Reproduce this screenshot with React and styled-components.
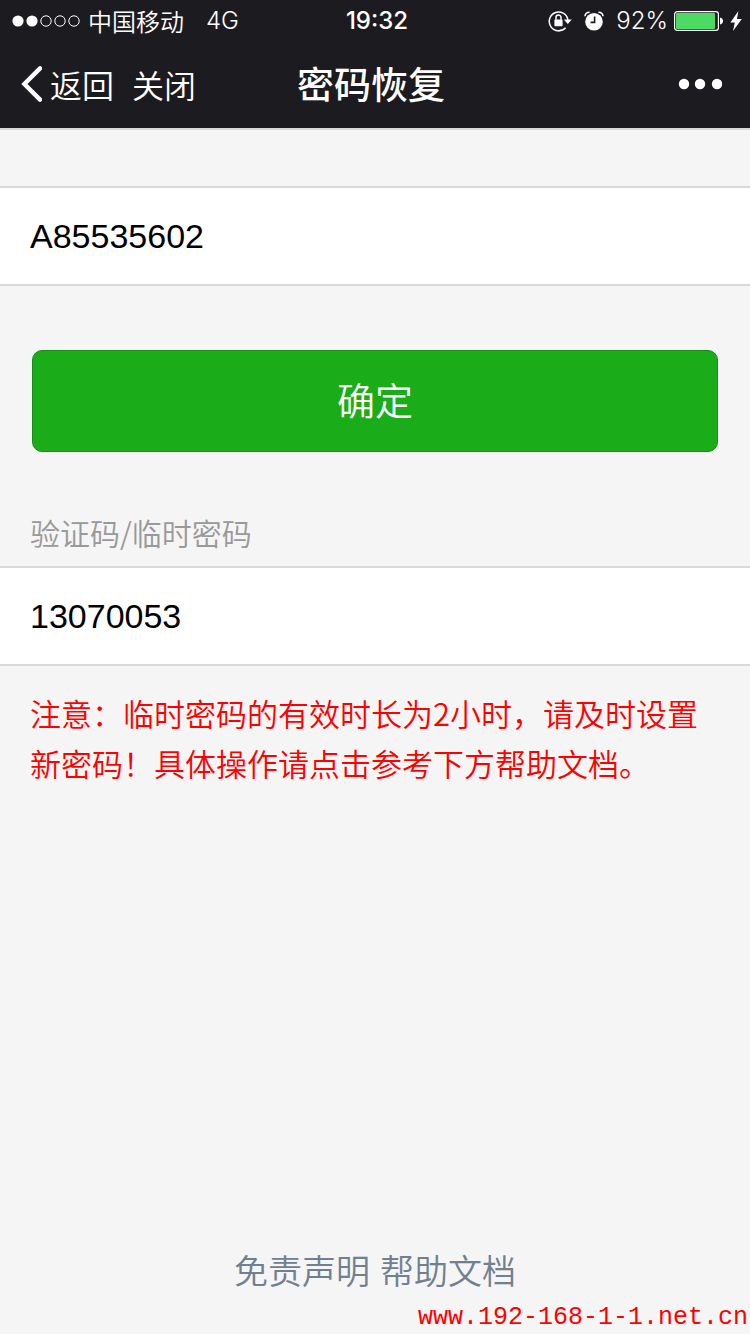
import React, { useState } from "react";
import styled, { createGlobalStyle } from "styled-components";

function SignalIcon() {
  return (
    <svg width="68" height="14" viewBox="0 0 68 14" aria-hidden="true">
      <circle cx="6" cy="7" r="5.6" fill="#fff" />
      <circle cx="20" cy="7" r="5.6" fill="#fff" />
      {[34, 48, 62].map((cx) => (
        <circle key={cx} cx={cx} cy="7" r="5.2" fill="none" stroke="#fff" />
      ))}
    </svg>
  );
}

function RotationLockIcon() {
  return (
    <svg width="24" height="22" viewBox="0 0 24 22" aria-hidden="true">
      <path
        d="M17.6 17.8A9.4 9.4 0 1 1 19.9 9.8"
        fill="none"
        stroke="#fff"
        strokeWidth="1.5"
      />
      <path d="M15.8 9.6h8l-4 4.4z" fill="#fff" />
      <rect x="6.4" y="9.4" width="8.2" height="6.8" rx="0.6" fill="#fff" />
      <path
        d="M8 9.8V7.6a2.5 2.5 0 0 1 5 0v2.2"
        fill="none"
        stroke="#fff"
        strokeWidth="1.5"
      />
    </svg>
  );
}

function AlarmIcon() {
  return (
    <svg width="20" height="20" viewBox="0 0 20 20" aria-hidden="true">
      <circle cx="10" cy="10.8" r="8.8" fill="#fff" />
      <path
        d="M1 5.2C1.2 2.4 3 1.2 5.6 1.2M19 5.2C18.8 2.4 17 1.2 14.4 1.2"
        fill="none"
        stroke="#fff"
        strokeWidth="1.6"
      />
      <path
        d="M10.6 5.4v6H6.6"
        fill="none"
        stroke="#1c1b20"
        strokeWidth="1.6"
      />
    </svg>
  );
}

function BatteryIcon() {
  return (
    <svg width="50" height="20" viewBox="0 0 50 20" aria-hidden="true">
      <rect
        x="0.6"
        y="0.6"
        width="43.8"
        height="18.8"
        rx="2.6"
        fill="none"
        stroke="#fff"
        strokeWidth="1.2"
      />
      <rect x="2" y="2" width="39" height="16" rx="1" fill="#4cd964" />
      <path d="M46 6.6c2 .4 3 1.6 3 3.4s-1 3-3 3.4z" fill="#fff" />
    </svg>
  );
}

function BoltIcon() {
  return (
    <svg width="12" height="20" viewBox="0 0 12 20" aria-hidden="true">
      <path d="M8.4 0 0.4 11.4h4.4L3 20l8.8-12H7z" fill="#fff" />
    </svg>
  );
}

function BackIcon() {
  return (
    <svg width="22" height="36" viewBox="0 0 22 36" aria-hidden="true">
      <path
        d="M20 2.4 4.4 18 20 33.6"
        fill="none"
        stroke="#fff"
        strokeWidth="4.4"
        strokeLinecap="round"
      />
    </svg>
  );
}

function MoreIcon() {
  return (
    <svg width="44" height="12" viewBox="0 0 44 12" aria-hidden="true">
      {[6, 22, 39].map((cx) => (
        <circle key={cx} cx={cx} cy="6" r="5.2" fill="#fff" />
      ))}
    </svg>
  );
}

function App() {
  const [account, setAccount] = useState("A85535602");
  const [code, setCode] = useState("13070053");

  return (
    <Page>
      <GlobalStyle />
      <Header>
        <StatusBar>
          <StatusGroup>
            <SignalIcon />
            <Carrier>中国移动</Carrier>
            <StatusText>4G</StatusText>
          </StatusGroup>
          <Clock>19:32</Clock>
          <StatusGroup $end>
            <RotationLockIcon />
            <AlarmIcon />
            <Battery>
              <StatusText>92%</StatusText>
              <BatteryIcon />
              <BoltIcon />
            </Battery>
          </StatusGroup>
        </StatusBar>
        <NavBar>
          <NavGroup>
            <NavButton type="button">
              <BackIcon />
              返回
            </NavButton>
            <NavButton type="button">关闭</NavButton>
          </NavGroup>
          <Title>密码恢复</Title>
          <NavGroup $end>
            <NavButton type="button" aria-label="更多">
              <MoreIcon />
            </NavButton>
          </NavGroup>
        </NavBar>
      </Header>
      <Form onSubmit={(e) => e.preventDefault()}>
        <Field
          type="text"
          aria-label="账号"
          value={account}
          onChange={(e) => setAccount(e.target.value)}
        />
        <SubmitButton type="submit">确定</SubmitButton>
        <FieldLabel htmlFor="code">验证码/临时密码</FieldLabel>
        <Field
          type="text"
          id="code"
          value={code}
          onChange={(e) => setCode(e.target.value)}
        />
        <Notice>
          注意：临时密码的有效时长为2小时，请及时设置新密码！具体操作请点击参考下方帮助文档。
        </Notice>
      </Form>
      <Footer>
        <FooterLinks>
          <FooterLink href="#disclaimer">免责声明</FooterLink>
          <FooterLink href="#help">帮助文档</FooterLink>
        </FooterLinks>
        <SiteMark>www.192-168-1-1.net.cn</SiteMark>
      </Footer>
    </Page>
  );
}

const GlobalStyle = createGlobalStyle`
  * {
    box-sizing: border-box;
  }

  body {
    margin: 0;
    background: #f5f5f5;
    font-family: "Noto Sans CJK SC", sans-serif;
    font-weight: 350;
  }

  button,
  input {
    font-family: inherit;
    font-weight: inherit;
  }
`;

const Page = styled.div`
  display: flex;
  flex-direction: column;
  min-height: 100vh;
`;

const Header = styled.header`
  background: #1c1b20;
  color: #fff;
  border-bottom: 2px solid #d9d9d9;
`;

const StatusBar = styled.div`
  display: grid;
  grid-template-columns: 1fr auto 1fr;
  align-items: center;
  height: 40px;
  padding: 2px 8px 0 12px;
`;

const StatusGroup = styled.div`
  display: flex;
  align-items: center;
  gap: ${(props) => (props.$end ? "12px" : "8px")};
  justify-content: ${(props) => (props.$end ? "flex-end" : "flex-start")};
`;

const StatusText = styled.span`
  font-family: Inter, sans-serif;
  font-size: 24px;
  line-height: 28px;
`;

const Carrier = styled.span`
  margin-right: 14px;
  font-size: 24px;
  line-height: 28px;
`;

const Clock = styled.time`
  font-family: Inter, sans-serif;
  font-size: 24px;
  font-weight: 500;
  line-height: 28px;
`;

const Battery = styled.div`
  display: flex;
  align-items: center;
  gap: 6px;
`;

const NavBar = styled.nav`
  display: grid;
  grid-template-columns: 1fr auto 1fr;
  align-items: center;
  height: 88px;
  padding: 0 28px 0 20px;
`;

const NavGroup = styled.div`
  display: flex;
  align-items: center;
  gap: 18px;
  justify-content: ${(props) => (props.$end ? "flex-end" : "flex-start")};
`;

const NavButton = styled.button`
  display: flex;
  align-items: center;
  gap: 8px;
  padding: 0;
  border: 0;
  background: none;
  color: inherit;
  font-size: 32px;
  line-height: 44px;
`;

const Title = styled.h1`
  margin: 0;
  padding-bottom: 2px;
  font-size: 37px;
  font-weight: 500;
  line-height: 44px;
`;

const Form = styled.form`
  display: flex;
  flex-direction: column;
  padding-top: 56px;
`;

const Field = styled.input`
  width: 100%;
  height: 100px;
  padding: 0 30px;
  border: 0;
  border-top: 2px solid #d9d9d9;
  border-bottom: 2px solid #d9d9d9;
  border-radius: 0;
  background: #fff;
  color: #000;
  font-family: "Liberation Sans", sans-serif;
  font-size: 34px;
  outline: none;
`;

const SubmitButton = styled.button`
  height: 102px;
  margin: 64px 32px 58px;
  padding: 0 0 4px;
  border: 1px solid #178f17;
  border-radius: 10px;
  background: #1aad19;
  color: #fff;
  font-size: 38px;
  line-height: 54px;
`;

const FieldLabel = styled.label`
  padding: 0 30px 12px;
  color: #999;
  font-size: 30px;
  line-height: 44px;
`;

const Notice = styled.p`
  margin: 0;
  padding: 22px 30px;
  color: #f00;
  font-size: 31px;
  line-height: 50px;
`;

const Footer = styled.footer`
  margin-top: auto;
`;

const FooterLinks = styled.div`
  display: flex;
  justify-content: center;
  gap: 10px;
  padding-bottom: 8px;
`;

const FooterLink = styled.a`
  color: #708090;
  font-size: 34px;
  line-height: 48px;
  text-decoration: none;
`;

const SiteMark = styled.p`
  margin: 0;
  padding-right: 2px;
  color: #f00;
  font-family: "Liberation Mono", monospace;
  font-size: 25px;
  line-height: 32px;
  text-align: right;
`;

export default App;
